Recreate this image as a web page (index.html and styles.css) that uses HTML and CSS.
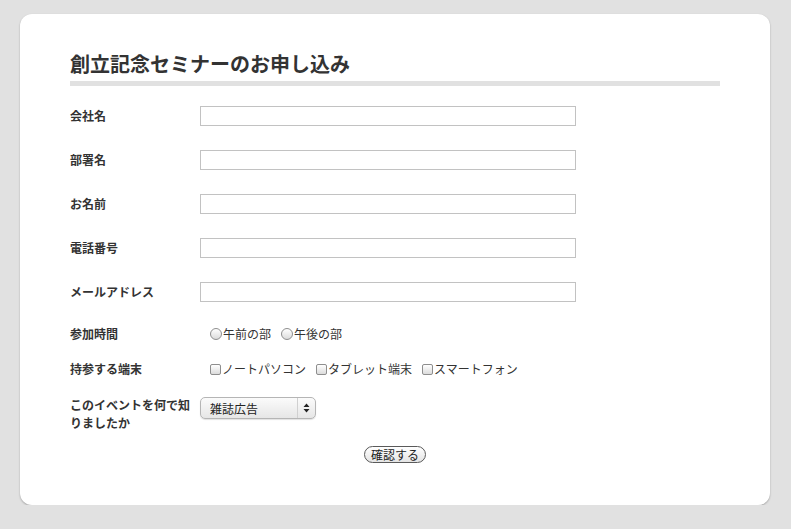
FILE: index.html
```html
<!DOCTYPE html>
<html lang="ja">
<head>
<meta charset="utf-8">
<title>創立記念セミナーのお申し込み</title>
<link rel="stylesheet" href="styles.css">
</head>
<body>
<div class="card">
  <h1 class="title">創立記念セミナーのお申し込み</h1>
  <form class="form">
    <div class="row text-row">
      <label class="label">会社名</label>
      <input class="field" type="text">
    </div>
    <div class="row text-row">
      <label class="label">部署名</label>
      <input class="field" type="text">
    </div>
    <div class="row text-row">
      <label class="label">お名前</label>
      <input class="field" type="text">
    </div>
    <div class="row text-row">
      <label class="label">電話番号</label>
      <input class="field" type="text">
    </div>
    <div class="row text-row">
      <label class="label">メールアドレス</label>
      <input class="field" type="text">
    </div>
    <div class="row opt-row first-opt">
      <span class="label">参加時間</span>
      <div class="options">
        <label class="opt"><input class="radio" type="radio" name="t">午前の部</label>
        <label class="opt"><input class="radio" type="radio" name="t">午後の部</label>
      </div>
    </div>
    <div class="row opt-row">
      <span class="label">持参する端末</span>
      <div class="options">
        <label class="opt"><input class="check" type="checkbox">ノートパソコン</label>
        <label class="opt"><input class="check" type="checkbox">タブレット端末</label>
        <label class="opt"><input class="check" type="checkbox">スマートフォン</label>
      </div>
    </div>
    <div class="row select-row">
      <span class="label multi">このイベントを何で知りましたか</span>
      <div class="select">
        <span class="select-text">雑誌広告</span>
        <span class="select-arrows">
          <svg width="7" height="10" viewBox="0 0 7 10"><path d="M3.5 0.5 L6.5 4 L0.5 4 Z M3.5 9.5 L6.5 6 L0.5 6 Z" fill="#222"/></svg>
        </span>
      </div>
    </div>
    <div class="actions">
      <button class="button" type="button">確認する</button>
    </div>
  </form>
</div>
</body>
</html>
```

FILE: styles.css
```css
html, body {
  margin: 0;
  padding: 0;
}
body {
  background: #e1e1e1;
  font-family: "Noto Sans CJK JP", "Liberation Sans", sans-serif;
  color: #333;
  padding: 14px 21px 0 20px;
}
.card {
  box-sizing: border-box;
  width: 750px;
  height: 491px;
  background: #fff;
  border-radius: 12px;
  box-shadow: 0 1px 2px rgba(0, 0, 0, 0.28);
  padding: 36px 50px 0 50px;
}
.title {
  margin: 0;
  font-size: 20px;
  line-height: 28px;
  font-weight: bold;
  color: #333;
  padding-bottom: 3px;
  border-bottom: 5px solid #e1e1e1;
}
.form {
  margin: 0;
  padding-top: 20px;
}
.row {
  display: flex;
  align-items: center;
}
.text-row {
  height: 20px;
  margin-bottom: 24px;
}
.label {
  width: 130px;
  flex: none;
  font-size: 12px;
  font-weight: bold;
  color: #333;
  line-height: 18px;
}
.text-row .label {
  margin-top: -1px;
}
.field {
  box-sizing: border-box;
  width: 376px;
  height: 20px;
  margin: 0;
  border: 1px solid #c2c2c2;
  background: #fff;
  padding: 0 3px;
  font-size: 12px;
}
.opt-row {
  height: 16px;
  margin-bottom: 19px;
}
.first-opt {
  margin-top: 0;
}
.options {
  display: flex;
  align-items: center;
  padding-left: 10px;
  gap: 10px;
}
.opt {
  display: flex;
  align-items: center;
  font-size: 12px;
  line-height: 16px;
  color: #333;
}
.radio {
  appearance: none;
  -webkit-appearance: none;
  box-sizing: border-box;
  width: 12px;
  height: 12px;
  margin: 0 1px 0 0;
  border-radius: 50%;
  border: 1px solid #8e8e8e;
  background: linear-gradient(#ffffff, #dcdcdc);
}
.check {
  appearance: none;
  -webkit-appearance: none;
  box-sizing: border-box;
  width: 11px;
  height: 11px;
  margin: 0 1px 0 0;
  border-radius: 2px;
  border: 1px solid #8e8e8e;
  background: linear-gradient(#ffffff, #dcdcdc);
}
.select-row {
  align-items: flex-start;
  margin-top: 0;
}
.multi {
  width: 130px;
}
.select {
  box-sizing: border-box;
  width: 116px;
  height: 22px;
  margin-top: 1px;
  display: flex;
  align-items: center;
  border: 1px solid #b5b5b5;
  border-radius: 5px;
  background: linear-gradient(#fbfbfb, #e6e6e6);
  box-shadow: 0 1px 1px rgba(0, 0, 0, 0.12);
}
.select-text {
  flex: 1;
  padding-left: 9px;
  font-size: 12px;
  color: #222;
}
.select-arrows {
  width: 17px;
  height: 100%;
  border-left: 1px solid #d0d0d0;
  display: flex;
  align-items: center;
  justify-content: center;
}
.select-arrows svg {
  display: block;
}
.actions {
  display: flex;
  justify-content: center;
  margin-top: 14px;
}
.button {
  box-sizing: border-box;
  height: 17px;
  padding: 0 6px;
  margin: 0;
  border: 1px solid #5a5a5a;
  border-radius: 9px;
  background: linear-gradient(#ffffff, #e4e4e4);
  font-family: "Noto Sans CJK JP", "Liberation Sans", sans-serif;
  font-size: 12px;
  line-height: 15px;
  color: #222;
}
```
